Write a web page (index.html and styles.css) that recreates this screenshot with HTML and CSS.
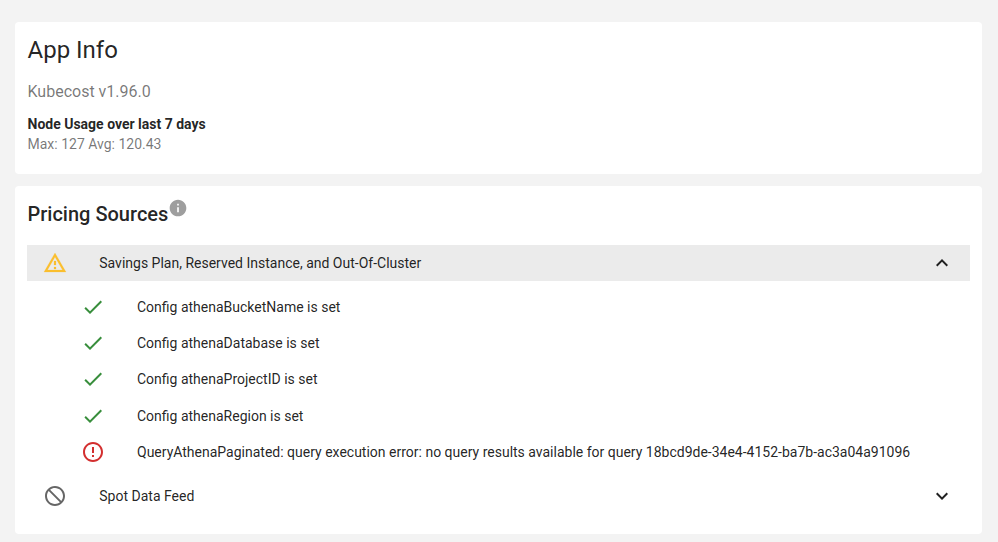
FILE: index.html
```html
<!DOCTYPE html>
<html>
<head>
    <meta charset="UTF-8">
    <title>App Info</title>
    <link rel="stylesheet" href="styles.css">
</head>
<body>
    <div class="card info-card">
        <h2 class="app-title">App Info</h2>
        <p class="version">Kubecost v1.96.0</p>
        <p class="usage-title">Node Usage over last 7 days</p>
        <p class="usage-value">Max: 127 Avg: 120.43</p>
    </div>

    <div class="card pricing-card">
        <div class="pricing-head">
            <h3 class="pricing-title">Pricing Sources</h3>
            <svg class="info-icon" viewBox="0 0 24 24"><path d="M12 2C6.48 2 2 6.48 2 12s4.48 10 10 10 10-4.48 10-10S17.52 2 12 2zm1 15h-2v-6h2v6zm0-8h-2V7h2v2z"/></svg>
        </div>

        <div class="row source-row open">
            <svg class="icon warn" viewBox="0 0 24 24"><path d="M12 5.99L19.53 19H4.47L12 5.99M12 2L1 21h22L12 2zm1 14h-2v2h2v-2zm0-6h-2v4h2v-4z"/></svg>
            <span class="row-text">Savings Plan, Reserved Instance, and Out-Of-Cluster</span>
            <svg class="icon chevron" viewBox="0 0 24 24"><path d="M12 8l-6 6 1.41 1.41L12 10.83l4.59 4.58L18 14z"/></svg>
        </div>

        <div class="checks">
            <div class="row check-row">
                <svg class="icon ok" viewBox="0 0 24 24"><path d="M9 16.17L4.83 12l-1.42 1.41L9 19 21 7l-1.41-1.41z"/></svg>
                <span class="row-text">Config athenaBucketName is set</span>
            </div>
            <div class="row check-row">
                <svg class="icon ok" viewBox="0 0 24 24"><path d="M9 16.17L4.83 12l-1.42 1.41L9 19 21 7l-1.41-1.41z"/></svg>
                <span class="row-text">Config athenaDatabase is set</span>
            </div>
            <div class="row check-row">
                <svg class="icon ok" viewBox="0 0 24 24"><path d="M9 16.17L4.83 12l-1.42 1.41L9 19 21 7l-1.41-1.41z"/></svg>
                <span class="row-text">Config athenaProjectID is set</span>
            </div>
            <div class="row check-row">
                <svg class="icon ok" viewBox="0 0 24 24"><path d="M9 16.17L4.83 12l-1.42 1.41L9 19 21 7l-1.41-1.41z"/></svg>
                <span class="row-text">Config athenaRegion is set</span>
            </div>
            <div class="row check-row">
                <svg class="icon err" viewBox="0 0 24 24"><path d="M11 15h2v2h-2zm0-8h2v6h-2zm.99-5C6.47 2 2 6.48 2 12s4.47 10 9.99 10C17.52 22 22 17.52 22 12S17.52 2 11.99 2zM12 20c-4.42 0-8-3.58-8-8s3.58-8 8-8 8 3.58 8 8-3.58 8-8 8z"/></svg>
                <span class="row-text">QueryAthenaPaginated: query execution error: no query results available for query 18bcd9de-34e4-4152-ba7b-ac3a04a91096</span>
            </div>
        </div>

        <div class="row source-row">
            <svg class="icon blocked" viewBox="0 0 24 24"><path d="M12 2C6.48 2 2 6.48 2 12s4.48 10 10 10 10-4.48 10-10S17.52 2 12 2zm0 18c-4.42 0-8-3.58-8-8 0-1.85.63-3.55 1.69-4.9L16.9 18.31C15.55 19.37 13.85 20 12 20zm6.31-3.1L7.1 5.69C8.45 4.63 10.15 4 12 4c4.42 0 8 3.58 8 8 0 1.85-.63 3.55-1.69 4.9z"/></svg>
            <span class="row-text">Spot Data Feed</span>
            <svg class="icon chevron" viewBox="0 0 24 24"><path d="M16.59 8.59L12 13.17 7.41 8.59 6 10l6 6 6-6z"/></svg>
        </div>
    </div>
</body>
</html>
```

FILE: styles.css
```css
html, body {
    height: 100%;
}
body {
    margin: 0;
    padding: 22px 16px 0 15px;
    box-sizing: border-box;
    overflow: hidden;
    font-family: Roboto, sans-serif;
    background-color: #f3f3f3;
    color: rgba(0,0,0,0.87);
}
.card {
    background-color: white;
    border-radius: 4px;
    padding: 0 12px;
}
.info-card {
    height: 152px;
    box-sizing: border-box;
    padding: 14px 12.5px 0;
}
.app-title {
    margin: 0;
    font-size: 24px;
    font-weight: 400;
    line-height: 28px;
}
.version {
    margin: 16px 0 0;
    font-size: 16px;
    line-height: 24px;
    color: rgba(0,0,0,0.54);
}
.usage-title {
    margin: 10px 0 0;
    font-size: 14px;
    font-weight: 700;
    line-height: 20px;
}
.usage-value {
    margin: 0;
    font-size: 14px;
    line-height: 20px;
    color: rgba(0,0,0,0.54);
}
.pricing-card {
    margin-top: 12px;
    height: 348px;
    box-sizing: border-box;
    padding-top: 14px;
}
.pricing-head {
    display: flex;
    align-items: flex-start;
    height: 45px;
    padding-left: 0.5px;
}
.pricing-title {
    margin: 0;
    font-size: 20px;
    font-weight: 500;
    line-height: 28px;
}
.info-icon {
    width: 20px;
    height: 20px;
    margin-top: -2px;
    fill: #9e9e9e;
}
.row {
    display: flex;
    align-items: center;
    font-size: 14px;
}
.row-text {
    flex: 1;
    line-height: 20px;
}
.icon {
    width: 24px;
    height: 24px;
    flex: none;
    margin-right: 32px;
}
.source-row {
    height: 36px;
    padding: 0 16px;
}
.source-row .row-text {
    padding-left: 0.3px;
}
.source-row.open {
    background-color: #ebebeb;
}
.checks {
    padding: 8px 0 8.5px;
}
.check-row {
    height: 36.2px;
    padding-left: 54px;
}
.chevron {
    margin-right: 0;
    fill: rgba(0,0,0,0.87);
}
.warn {
    fill: #fbbf2e;
    stroke: #fbbf2e;
    stroke-width: 0.2;
}
.ok {
    fill: #388e3c;
}
.err {
    fill: #d32f2f;
}
.blocked {
    fill: #666666;
}
```
